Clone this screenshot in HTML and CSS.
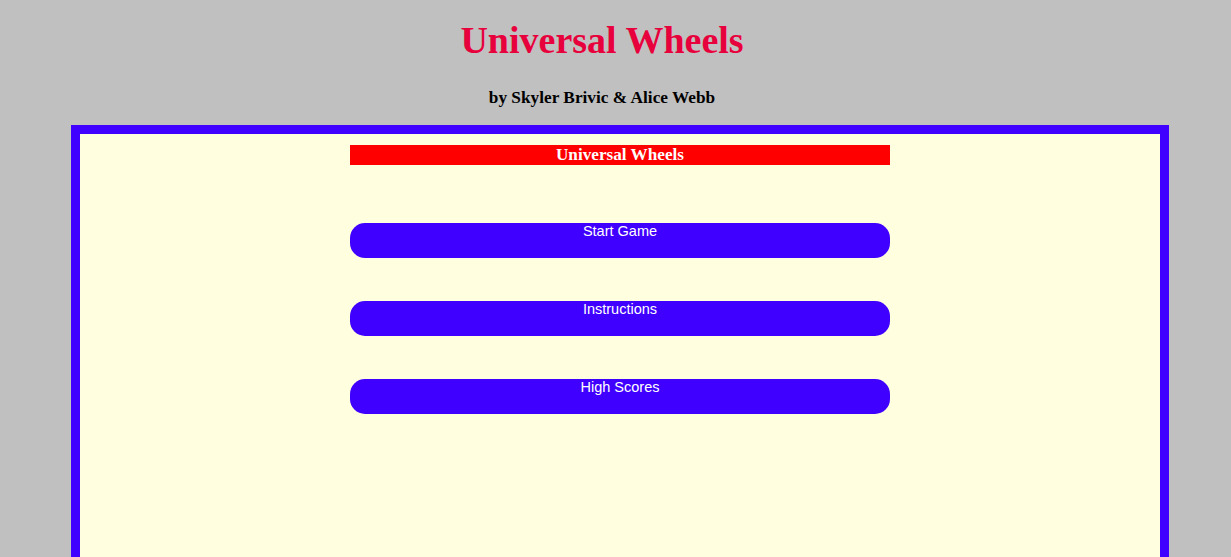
FILE: index.html
```html
<!DOCTYPE html>
<html>
<head>
<meta charset="utf-8">
<title>Universal Wheels</title>
<link rel="stylesheet" href="styles.css">
</head>
<body>
<header class="header">
  <h1 class="title">Universal Wheels</h1>
  <h3 class="byline">by Skyler Brivic &amp; Alice Webb</h3>
</header>
<main class="frame">
  <div class="banner">Universal Wheels</div>
  <div class="menu">
    <div class="btn">Start Game</div>
    <div class="btn">Instructions</div>
    <div class="btn">High Scores</div>
  </div>
</main>
</body>
</html>
```

FILE: styles.css
```css
html, body {
  margin: 0;
  padding: 0;
  background: #c0c0c0;
  overflow: hidden;
}
body {
  font-family: "Liberation Serif", "Times New Roman", serif;
}
.header {
  width: 1204px;
  text-align: center;
}
.title {
  margin: 18px 0 0;
  font-size: 38px;
  line-height: 44px;
  font-weight: bold;
  color: #e8003c;
}
.byline {
  margin: 25px 0 0;
  font-size: 17.3px;
  line-height: 22px;
  font-weight: bold;
  color: #000;
}
.frame {
  margin: 16px 0 0 71px;
  width: 1080px;
  height: 500px;
  border: 9px solid #4000ff;
  background: #ffffe0;
  padding-top: 11px;
  box-sizing: content-box;
}
.banner {
  width: 540px;
  height: 20px;
  margin: 0 auto;
  background: #ff0000;
  color: #fff;
  text-align: center;
  font-size: 17.2px;
  line-height: 20px;
  font-weight: bold;
}
.menu {
  width: 540px;
  margin: 58px auto 0;
  display: flex;
  flex-direction: column;
  gap: 43px;
}
.btn {
  height: 35px;
  box-sizing: border-box;
  padding-top: 0;
  border-radius: 15px;
  background: #4000ff;
  color: #fff;
  text-align: center;
  font-family: "Liberation Sans", Arial, sans-serif;
  font-size: 14.5px;
  line-height: normal;
}
```
